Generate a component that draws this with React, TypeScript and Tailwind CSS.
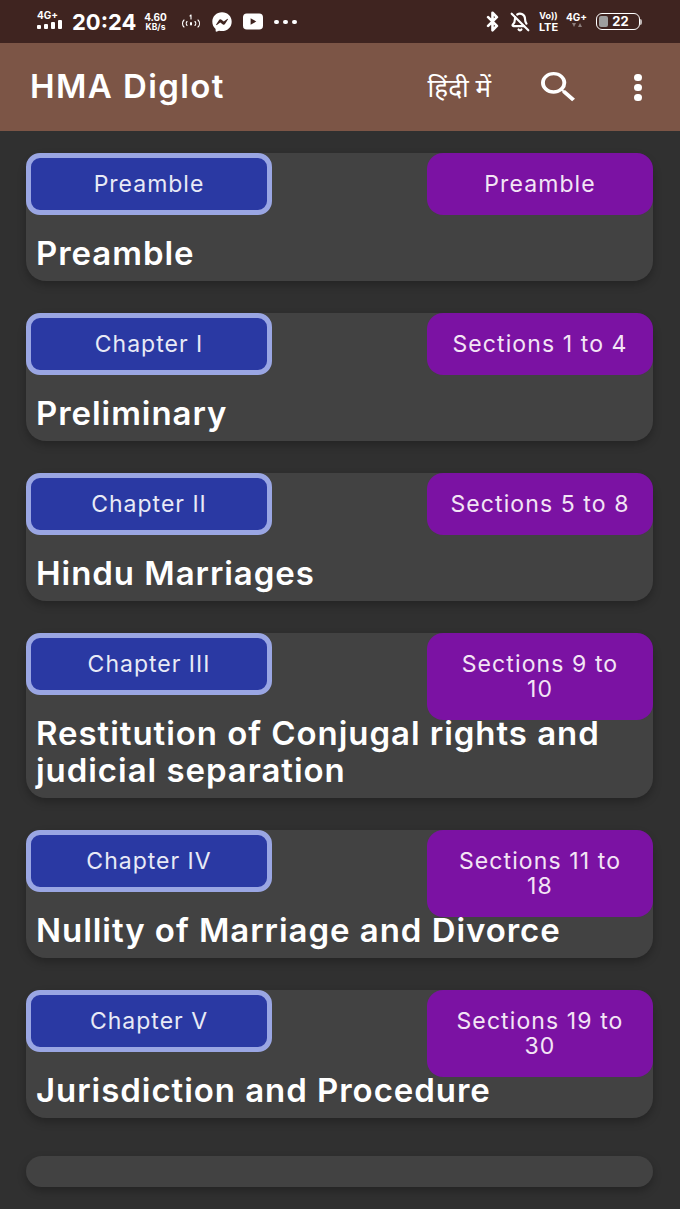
import { BellOff, Bluetooth } from 'lucide-react';
import { FaFacebookMessenger } from 'react-icons/fa';

const chapters = [
  { badge: 'Preamble', sections: 'Preamble', title: 'Preamble' },
  { badge: 'Chapter I', sections: 'Sections 1 to 4', title: 'Preliminary' },
  { badge: 'Chapter II', sections: 'Sections 5 to 8', title: 'Hindu Marriages' },
  { badge: 'Chapter III', sections: 'Sections 9 to 10', title: 'Restitution of Conjugal rights and judicial separation', tall: true },
  { badge: 'Chapter IV', sections: 'Sections 11 to 18', title: 'Nullity of Marriage and Divorce', tall: true },
  { badge: 'Chapter V', sections: 'Sections 19 to 30', title: 'Jurisdiction and Procedure', tall: true },
];

function StatusBar() {
  return (
    <div className="h-[43px] bg-[#3f2420] flex items-center justify-between pl-[37px] pr-[38px] text-white font-['Inter',sans-serif]">
      <div className="flex items-center">
        <div className="w-[29px] flex flex-col items-start mt-[-3px]">
          <span className="text-[10px] leading-[9px] font-bold">4G+</span>
          <svg width="28" height="9" viewBox="0 0 28 9" fill="white">
            <rect x="0" y="5" width="4" height="4" rx="1" />
            <rect x="7" y="4" width="4" height="5" rx="1" />
            <rect x="14" y="2" width="4" height="7" rx="1" />
            <rect x="21" y="0" width="4" height="9" rx="1" />
          </svg>
        </div>
        <span className="ml-[6px] w-[62px] text-[22px] leading-none font-bold">20:24</span>
        <div className="ml-[8px] w-[27px] flex flex-col items-center text-[8.5px] leading-[10px] font-bold">
          <span className="text-[10px]">4.60</span>
          <span>KB/s</span>
        </div>
        <svg className="ml-[11px]" width="22" height="20" viewBox="0 0 22 20" fill="none" stroke="white" strokeWidth="1.1" strokeLinecap="round">
          <path d="M4 8c-2 2-2 5 0 7" />
          <path d="M7 9.5c-1 1-1 3 0 4" />
          <path d="M18 8c2 2 2 5 0 7" />
          <path d="M15 9.5c1 1 1 3 0 4" />
          <path d="M11 3v4M10 4l1-1" />
          <path d="M11 11v1.5" strokeWidth="2" />
        </svg>
        <FaFacebookMessenger className="ml-[10px] text-[20px]" />
        <svg className="ml-[11px]" width="20" height="17" viewBox="0 0 21 17">
          <rect width="21" height="17" rx="4" fill="white" />
          <path d="M8 5l6 3.5-6 3.5z" fill="#3f2420" />
        </svg>
        <div className="ml-[11px] flex gap-[4px]">
          <span className="w-[5px] h-[4px] rounded-full bg-white" />
          <span className="w-[5px] h-[4px] rounded-full bg-white" />
          <span className="w-[5px] h-[4px] rounded-full bg-white" />
        </div>
      </div>
      <div className="flex items-center">
        <Bluetooth size={21} strokeWidth={3} />
        <BellOff size={20} strokeWidth={2.6} className="ml-[7px]" />
        <div className="ml-[6px] w-[25px] flex flex-col items-center font-bold whitespace-nowrap">
          <span className="text-[9px] leading-[11px]">Vo))</span>
          <span className="text-[11px] leading-[13px]">LTE</span>
        </div>
        <div className="ml-[4px] w-[23px] flex flex-col items-center mt-[-3px]">
          <span className="text-[10px] leading-[11px] font-bold">4G+</span>
          <svg width="10" height="6" viewBox="0 0 10 6" fill="#8d7f7c">
            <path d="M0 0h4L2 4zM6 4h4L8 0z" />
          </svg>
        </div>
        <div className="ml-[8px] w-[44px] h-[17px] rounded-[6px] border-[1.5px] border-white flex items-center justify-center relative">
          <span className="absolute left-[2px] top-[2px] bottom-[2px] w-[9px] rounded-[2px] bg-[#9e9e9e]" />
          <span className="relative text-[13px] font-bold leading-none ml-[5px]">22</span>
        </div>
        <span className="w-[2px] h-[6px] bg-[#bdb5b3] rounded-r-sm" />
      </div>
    </div>
  );
}

function AppBar() {
  return (
    <div className="h-[88px] bg-[#7c5546] flex items-center pl-[30px] text-white">
      <h1 className="text-[33px] font-semibold tracking-[1.4px]">HMA Diglot</h1>
      <span className="ml-auto text-[26px] leading-none font-['Noto_Sans','Noto_Sans_Devanagari','Lohit_Devanagari',sans-serif]">हिंदी में</span>
      <svg className="ml-[50px]" width="35" height="30" viewBox="3 3 18 18" preserveAspectRatio="none" fill="white">
        <path d="M15.5 14h-.79l-.28-.27A6.47 6.47 0 0 0 16 9.5 6.5 6.5 0 1 0 9.5 16c1.61 0 3.09-.59 4.23-1.57l.27.28v.79l5 4.99L20.49 19l-4.99-5zm-6 0C7.01 14 5 11.99 5 9.5S7.01 5 9.5 5 14 7.01 14 9.5 11.99 14 9.5 14z" />
      </svg>
      <div className="ml-[58px] mr-[38px] flex flex-col gap-[3px]">
        <span className="w-[8px] h-[7px] rounded-full bg-white" />
        <span className="w-[8px] h-[7px] rounded-full bg-white" />
        <span className="w-[8px] h-[7px] rounded-full bg-white" />
      </div>
    </div>
  );
}

function ChapterCard({ badge, sections, title, tall }: { badge: string; sections: string; title: string; tall?: boolean }) {
  return (
    <div className="bg-[#424242] rounded-[20px] shadow-[0_4px_8px_rgba(0,0,0,0.25)] pb-[9px]">
      <div className="h-[62px] flex items-start justify-between">
        <div className="w-[246px] h-[62px] rounded-[14px] border-[5px] border-[#9aa6e3] bg-[#2a39a3] flex items-center justify-center text-[23px] tracking-[1px] text-[#e8eaf6]">
          {badge}
        </div>
        <div className={`w-[226px] ${tall ? 'h-[87px]' : 'h-[62px]'} relative z-10 rounded-[16px] bg-[#7b12a3] flex items-center justify-center text-center px-[20px] text-[23px] tracking-[1.1px] leading-[25px] text-[#f3e5f5]`}>
          {sections}
        </div>
      </div>
      <h2 className="mt-[20px] pl-[10px] pr-[40px] text-[33px] leading-[37px] font-semibold tracking-[0.95px] text-white">{title}</h2>
    </div>
  );
}

export default function App() {
  return (
    <div className="h-[1209px] overflow-hidden bg-[#303030] font-['Inter',sans-serif]">
      <StatusBar />
      <AppBar />
      <div className="pt-[22px] pl-[26px] pr-[27px] flex flex-col gap-[32px]">
        {chapters.map((c) => (
          <ChapterCard key={c.badge} {...c} />
        ))}
        <div className="mt-[6px] h-[31px] rounded-[16px] bg-[#424242] shadow-[0_4px_8px_rgba(0,0,0,0.25)]" />
      </div>
    </div>
  );
}
